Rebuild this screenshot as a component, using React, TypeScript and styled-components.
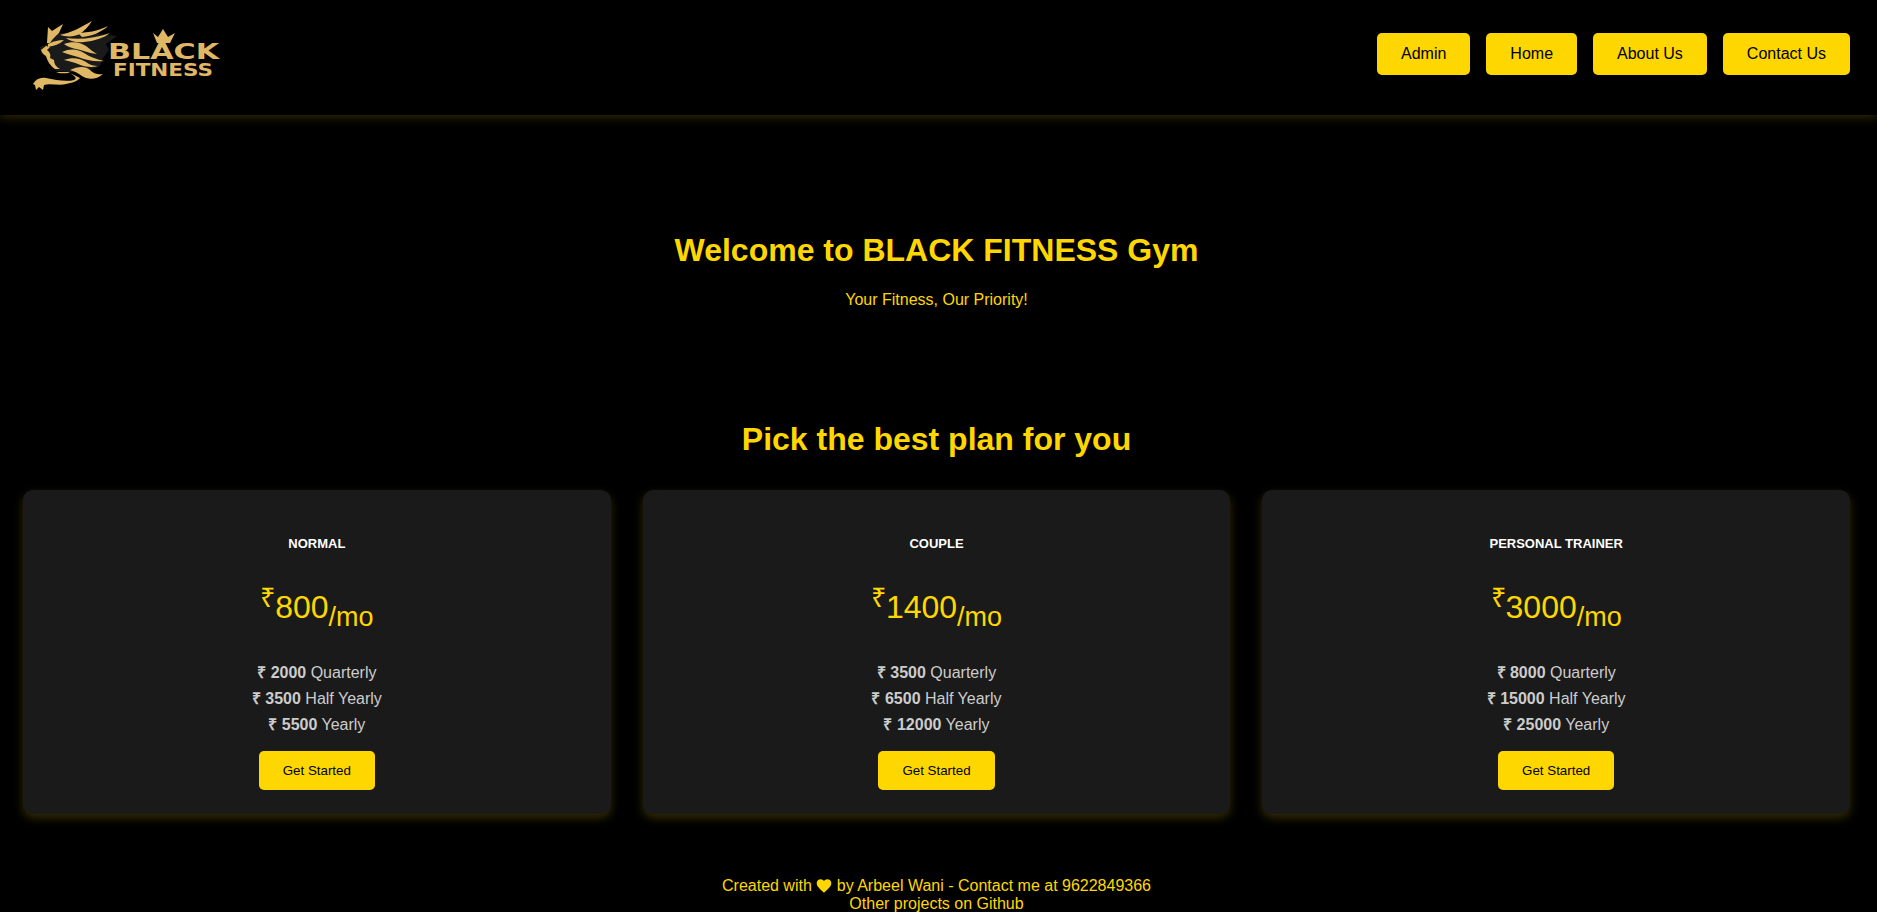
import styled, { createGlobalStyle } from "styled-components";

const GOLD = "#ffd700";
const LOGO_GOLD = "#e0b865";

const GlobalStyle = createGlobalStyle`
  html, body {
    margin: 0;
    height: 912px;
    overflow: hidden;
    background: #000;
    color: ${GOLD};
    font-family: "Liberation Sans", Arial, sans-serif;
  }
`;

const Header = styled.header`
  display: flex;
  align-items: center;
  justify-content: space-between;
  height: 115px;
  box-sizing: border-box;
  padding: 0 27px 7px 28px;
  box-shadow: 0 2px 10px rgba(255, 215, 0, 0.2);
`;

const LogoSvg = styled.svg`
  display: block;
  width: 200px;
  height: 80px;
`;

const Nav = styled.nav`
  display: flex;
  gap: 16px;
`;

const NavButton = styled.button`
  padding: 12px 24px;
  border: none;
  border-radius: 5px;
  background: ${GOLD};
  color: #000;
  font-family: inherit;
  font-size: 16px;
  cursor: pointer;
`;

const Main = styled.main`
  padding: 0 27px 0 23px;
  text-align: center;
`;

const Hero = styled.section`
  padding-top: 117px;
`;

const Title = styled.h1`
  margin: 0;
  font-size: 32px;
  line-height: 37px;
`;

const Tagline = styled.p`
  margin: 22px 0 0;
  font-size: 16px;
  line-height: 18px;
`;

const PlansHeading = styled.h2`
  margin: 112px 0 32px;
  font-size: 32px;
  line-height: 37px;
`;

const PlanGrid = styled.div`
  display: grid;
  grid-template-columns: repeat(3, 1fr);
  gap: 32px;
`;

const Card = styled.article`
  display: flex;
  flex-direction: column;
  align-items: center;
  height: 324px;
  box-sizing: border-box;
  padding-top: 46px;
  border-radius: 10px;
  background: #1a1a1a;
  box-shadow: 0 4px 10px rgba(255, 215, 0, 0.2);
`;

const PlanName = styled.h3`
  margin: 0;
  color: #fff;
  font-size: 13px;
  line-height: 15px;
  text-transform: uppercase;
`;

const Price = styled.div`
  margin-top: 38px;
  color: ${GOLD};
  font-size: 32px;
  line-height: 37px;
`;

const PriceSymbol = styled.span`
  font-size: 27px;
  line-height: 0;
  vertical-align: 11px;
`;

const PriceUnit = styled.span`
  font-size: 27px;
  line-height: 0;
  vertical-align: -8px;
`;

const Rates = styled.ul`
  margin: 34px 0 0;
  padding: 0;
  list-style: none;
  color: #ccc;
  font-size: 16px;
  line-height: 26px;
`;

const GetStarted = styled.button`
  margin-top: 13px;
  padding: 12px 24px;
  border: none;
  border-radius: 5px;
  background: ${GOLD};
  color: #000;
  font-family: inherit;
  font-size: 13.333px;
  cursor: pointer;
`;

const Footer = styled.footer`
  margin-top: 63px;
  text-align: center;
  font-size: 16px;
  line-height: 18px;
`;

const FooterLink = styled.a`
  display: block;
  color: ${GOLD};
  text-decoration: none;
`;

const HeartIcon = styled.svg`
  display: inline-block;
  width: 16px;
  height: 14px;
  vertical-align: -2px;
`;

function Logo() {
  return (
    <LogoSvg viewBox="28 14 200 80" aria-label="Black Fitness">
      {/* lion, coordinates follow the page so the strands are easy to nudge */}
      <path
        fill="#1a1a1a"
        d="M48 38 L60 33 L85 32 L117 36 L106 44 L109 50 L103 58 L100 66 L85 72 L70 72 L56 71 L50 63 L46 57 L41 53 L40 47 L46 45 Z"
      />
      <g fill={LOGO_GOLD}>
        <path d="M47 43 L48 27 L52 31 L63 24 L59 33 C56 36 52 39 50 43 Z" />
        <path d="M60 35 C70 33 80 28 92 21 C88 27 84 31 80 34 C74 37 66 37 60 35 Z" />
        <path d="M78 33 C86 33 98 31 108 26 C102 32 92 36 82 37 Z" />
        <path d="M66 38 C80 40 96 38 110 33 C104 38 94 41 84 42 C76 43 70 41 66 38 Z" />
        <path d="M64 44 C72 41 80 42 86 46 C90 49 93 52 97 54 C88 53 82 50 76 49 C72 48 68 47 64 44 Z" />
        <path d="M62 52 C70 48 78 49 84 53 C90 57 96 59 104 61 C94 62 86 60 78 57 C72 55 66 54 62 52 Z" />
        <path d="M64 60 C72 57 80 58 86 62 C90 65 94 66 98 66 C92 68 84 67 78 64 C74 62 68 61 64 60 Z" />
        <path d="M70 70 C78 66 86 66 90 70 C94 74 98 75 103 74 C96 80 88 80 82 76 C78 73 74 71 70 70 Z" />
        <path d="M48 44 C52 42 58 40 64 40 C60 44 54 46 48 47 Z" />
        <path d="M41 50 L46 46 L50 47 L47 50 C50 52 51 55 50 58 L54 60 C54 64 56 67 60 69 L55 69 C50 66 47 60 46 56 C44 55 42 53 41 50 Z" />
        <path d="M56 72 C60 74 64 73 70 73 C74 76 78 78 74 80 C66 82 56 80 46 78 C40 77 36 79 33 84 L35 85 L36 90 L39 87 L43 90 L44 85 C50 83 60 86 66 84 C72 83 78 81 80 78 C76 76 72 74 68 72 Z" />
        <path d="M153 33 L158 37 L163 29 L168 37 L175 33 L170 43 L157 43 Z" />
      </g>
      <g fill={LOGO_GOLD} fontFamily="'DejaVu Sans', sans-serif" fontWeight="700">
        <text x="108" y="59" fontSize="22" textLength="111" lengthAdjust="spacingAndGlyphs">
          BLACK
        </text>
        <text x="113" y="76" fontSize="18" textLength="100" lengthAdjust="spacingAndGlyphs">
          FITNESS
        </text>
      </g>
    </LogoSvg>
  );
}

const plans = [
  { name: "Normal", price: "800", rates: ["2000", "3500", "5500"] },
  { name: "Couple", price: "1400", rates: ["3500", "6500", "12000"] },
  { name: "Personal Trainer", price: "3000", rates: ["8000", "15000", "25000"] },
];

const terms = ["Quarterly", "Half Yearly", "Yearly"];

export default function App() {
  return (
    <>
      <GlobalStyle />
      <Header>
        <Logo />
        <Nav>
          <NavButton>Admin</NavButton>
          <NavButton>Home</NavButton>
          <NavButton>About Us</NavButton>
          <NavButton>Contact Us</NavButton>
        </Nav>
      </Header>
      <Main>
        <Hero>
          <Title>Welcome to BLACK FITNESS Gym</Title>
          <Tagline>Your Fitness, Our Priority!</Tagline>
        </Hero>
        <PlansHeading>Pick the best plan for you</PlansHeading>
        <PlanGrid>
          {plans.map((plan) => (
            <Card key={plan.name}>
              <PlanName>{plan.name}</PlanName>
              <Price>
                <PriceSymbol>₹</PriceSymbol>
                {plan.price}
                <PriceUnit>/mo</PriceUnit>
              </Price>
              <Rates>
                {plan.rates.map((rate, i) => (
                  <li key={terms[i]}>
                    <strong>₹ {rate}</strong> {terms[i]}
                  </li>
                ))}
              </Rates>
              <GetStarted>Get Started</GetStarted>
            </Card>
          ))}
        </PlanGrid>
        <Footer>
          Created with{" "}
          <HeartIcon viewBox="0 0 24 22" aria-hidden>
            <path
              fill={GOLD}
              d="M12 21.5 C5 15.5 0.5 11.5 0.5 6.8 C0.5 3 3.4 0.5 6.8 0.5 C9 0.5 11 1.6 12 3.4 C13 1.6 15 0.5 17.2 0.5 C20.6 0.5 23.5 3 23.5 6.8 C23.5 11.5 19 15.5 12 21.5 Z"
            />
          </HeartIcon>{" "}
          by Arbeel Wani - Contact me at 9622849366
          <FooterLink href="#">Other projects on Github</FooterLink>
        </Footer>
      </Main>
    </>
  );
}
